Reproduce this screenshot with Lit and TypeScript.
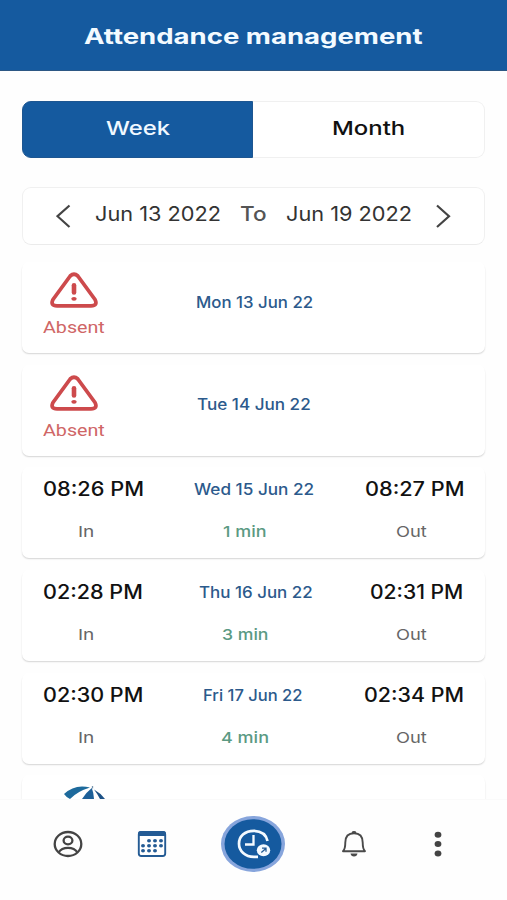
import { LitElement, html, css, svg } from "lit";
import { customElement, property, query } from "lit/decorators.js";

/** One line of text whose glyphs are widened to span a given width. */
@customElement("wide-text")
class WideText extends LitElement {
  @property() text = "";
  @property({ type: Number }) span = 0;
  @property({ type: Number }) lead = 0;
  @query(".glyphs") glyphs!: HTMLElement;

  static styles = css`
    :host { display: block; flex: none; white-space: nowrap; }
    .glyphs { display: inline-block; transform-origin: 0 50%; }
  `;

  updated() {
    this.style.width = `${this.span}px`;
    this.style.marginLeft = `${this.lead}px`;
    this.fit();
    document.fonts.ready.then(() => this.fit());
  }

  fit() {
    const natural = this.glyphs.offsetWidth;
    if (natural) this.glyphs.style.transform = `scaleX(${this.span / natural})`;
  }

  render() {
    return html`<span class="glyphs">${this.text}</span>`;
  }
}

// [text, width, space before]
type Label = [string, number, number];
interface Day {
  date: Label;
  absent?: boolean;
  start?: Label;
  end?: Label;
  total?: Label;
}

const days: Day[] = [
  { date: ["Mon 13 Jun 22", 117.5, 91], absent: true },
  { date: ["Tue 14 Jun 22", 114, 92], absent: true },
  { start: ["08:26 PM", 101.5, 0], date: ["Wed 15 Jun 22", 120, 49.5], end: ["08:27 PM", 99, 50.5], total: ["1 min", 43, 128] },
  { start: ["02:28 PM", 99.5, 0], date: ["Thu 16 Jun 22", 114, 56.5], end: ["02:31 PM", 93, 57], total: ["3 min", 47, 127] },
  { start: ["02:30 PM", 100.5, 0], date: ["Fri 17 Jun 22", 99.5, 59.5], end: ["02:34 PM", 100, 61], total: ["4 min", 48, 126] },
];

const label = ([text, span, lead]: Label, cls: string) =>
  html`<wide-text class=${cls} .text=${text} .span=${span} .lead=${lead}></wide-text>`;

const warning = svg`<svg class="warning" width="48" height="37" viewBox="0 0 48 37" fill="none" stroke="#cd4a4c">
  <path d="M20.2 4Q24 .4 27.8 4L45 27.500Q48 33.800 41 33.800H7Q0 33.800 3 27.500Z" stroke-width="3.8" stroke-linejoin="round"/>
  <path d="M24 13.300V20.500" stroke-width="4.600" stroke-linecap="round"/>
  <ellipse cx="24" cy="26.800" rx="2.700" ry="1.900" fill="#cd4a4c" stroke="none"/>
</svg>`;

@customElement("app-root")
class AppRoot extends LitElement {
  static styles = css`
    :host {
      display: flex; flex-direction: column; height: 900px; overflow: hidden;
      background: #fefefe; font-family: Inter, "Liberation Sans", sans-serif;
    }
    * { box-sizing: border-box; }
    svg { display: block; flex: none; }
    .header {
      flex: none; height: 71px; padding: 22px 0 0 84px; background: #155a9f;
      border-bottom: 1px solid #2c5784; color: #f3faff;
    }
    .title { font-size: 21.5px; line-height: 29px; font-weight: 650; }
    .content { flex: 1; min-height: 0; overflow: hidden; padding: 30px 22px 0; }
    .tabs { display: flex; height: 57px; }
    .tab {
      width: 232px; line-height: 54px; font-size: 19px; font-weight: 550; color: #111;
      border: 1px solid #f0f0f0; border-left: 0; border-radius: 0 9px 9px 0; background: #fff;
    }
    .tab.active {
      width: 231px; border: 1px solid #1d5691; border-radius: 9px 0 0 9px;
      background: #155a9f; color: #f0f8ff;
    }
    .range {
      display: flex; height: 58px; margin-top: 29px; padding-left: 33px;
      border: 1px solid #f0f0f0; border-bottom-color: #ebebeb; border-radius: 9px; background: #fff;
      font-size: 20px; line-height: 52px; color: #333;
    }
    .to { font-weight: 500; color: #555; }
    .arrow { margin-top: 15.5px; }
    .arrow.next { margin-left: 24px; }
    .list { display: grid; grid-auto-rows: 91px; row-gap: 11.7px; margin-top: 17px; }
    .card {
      margin-right: 1px; padding: 0 21px; border-radius: 7px; background: #fff;
      box-shadow: 0 1.5px 1.5px -0.5px rgba(0, 0, 0, 0.16);
    }
    .card.absent { display: flex; }
    .status { display: flex; flex-direction: column; width: 62px; padding-top: 10px; }
    .warning { margin-left: 7px; }
    .absent-label { font-family: Roboto, sans-serif; font-size: 17.3px; line-height: 36px; color: #cf6666; }
    .card.absent .date { margin-top: 29.5px; }
    .row { display: flex; height: 20px; line-height: 20px; margin-top: 12px; }
    .row + .row { margin-top: 23px; }
    .time { font-size: 19.5px; font-weight: 500; color: #111; }
    .date { font-size: 15.3px; line-height: 21px; font-weight: 550; color: #2c5a8c; }
    .dir { font-size: 15px; color: #666; }
    .total { font-size: 15px; font-weight: 500; color: #5b9a83; }
    .umbrella { margin: 11px 0 0 20px; }
    .nav {
      flex: none; display: flex; align-items: center; height: 101px; padding: 0 0 13px 53px;
      background: #fefefe; border-top: 1px solid #fafafa;
    }
    .calendar { margin-left: 54px; }
    .clock { margin-left: 54px; }
    .bell { margin-left: 56px; }
    .more { margin-left: 66.5px; }
  `;

  card(day: Day) {
    if (day.absent) {
      return html`<div class="card absent">
        <div class="status">${warning}${label(["Absent", 61.5, 0], "absent-label")}</div>
        ${label(day.date, "date")}
      </div>`;
    }
    const [, totalWidth, totalLead] = day.total!;
    return html`<div class="card">
      <div class="row">
        ${label(day.start!, "time")}${label(day.date, "date")}${label(day.end!, "time")}
      </div>
      <div class="row">
        ${label(["In", 16.5, 35], "dir")}
        ${label(day.total!, "total")}
        ${label(["Out", 30.5, 301.5 - totalWidth - totalLead], "dir")}
      </div>
    </div>`;
  }

  calendarDots() {
    const rows: [number, number[]][] = [[10.8, [11, 17, 23]], [15.8, [5, 11, 17, 23]], [20.7, [5, 11, 17]]];
    return rows.map(([y, xs]) => xs.map((x) => svg`<ellipse cx=${x} cy=${y} rx="2" ry="1.75"/>`));
  }

  render() {
    return html`
      <div class="header">${label(["Attendance management", 338, 0], "title")}</div>
      <div class="content">
        <div class="tabs">
          <div class="tab active">${label(["Week", 64, 83], "name")}</div>
          <div class="tab">${label(["Month", 73, 79], "name")}</div>
        </div>
        <div class="range">
          <svg class="arrow" width="16" height="24" viewBox="0 0 16 24" fill="none" stroke="#444" stroke-width="2.2">
            <path d="M13.500 1.500 1.500 12.200 13.500 23"/>
          </svg>
          ${label(["Jun 13 2022", 126, 23], "day")}
          ${label(["To", 27, 18.5], "to")}
          ${label(["Jun 19 2022", 126, 19.5], "day")}
          <svg class="arrow next" width="16" height="24" viewBox="0 0 16 24" fill="none" stroke="#444" stroke-width="2.200">
            <path d="M1 1.500 13 12.200 1 23"/>
          </svg>
        </div>
        <div class="list">
          ${days.map((d) => this.card(d))}
          <div class="card">
            <svg class="umbrella" width="44" height="26" viewBox="0 0 44 26">
              <path d="M1 8Q12-2.500 27 1.500 14 5.500 7 13 3 11 1 8Z" fill="#1d6a9c"/>
              <path d="M19 13Q23 6.500 28.800 2 30.500 6 31 13Z" fill="#1c5f98"/>
              <path d="M31 3.500Q37.500 7 42 13H37Q34.500 8 31 3.500Z" fill="#1d5286"/>
              <path d="M29.500 0V2.500" stroke="#7895ad" stroke-width="1.300"/>
            </svg>
          </div>
        </div>
      </div>
      <div class="nav">
        <svg width="30" height="28" viewBox="0 0 30 28" fill="none" stroke="#444" stroke-width="2.300">
          <ellipse cx="15" cy="14" rx="13.300" ry="12"/>
          <ellipse cx="15" cy="10.500" rx="4.400" ry="3.900"/>
          <path d="M5.500 22.500Q8.500 17.800 15 17.800T24.500 22.500"/>
        </svg>
        <svg class="calendar" width="30" height="28" viewBox="0 0 30 28" fill="#245b94">
          <rect x="1.800" y="2" width="26.400" height="24" rx="2.500" fill="#fff" stroke="#245b94" stroke-width="1.900"/>
          <path d="M1 6V4Q1 1 4 1H26Q29 1 29 4V6Z"/>
          <g transform="translate(1 0)">${this.calendarDots()}</g>
        </svg>
        <svg class="clock" width="64" height="56" viewBox="0 0 64 56" fill="none">
          <ellipse cx="32" cy="28" rx="32" ry="28" fill="#87a5dc"/>
          <ellipse cx="32" cy="28" rx="28.500" ry="24.800" fill="#155a9f"/>
          <path d="M46.500 25Q44.500 15.300 33 14.800C23.500 14.800 18 20.500 18 27.700S24 40.800 33 40.800H37" stroke="#f4faff" stroke-width="2.700"/>
          <path d="M32.500 19V28.500H24" stroke="#f4faff" stroke-width="2.300"/>
          <ellipse cx="42.500" cy="34.300" rx="7.500" ry="6.800" fill="#155a9f"/>
          <ellipse cx="42.500" cy="34.300" rx="6.700" ry="6" fill="#f4faff"/>
          <path d="M40.300 36.600 44.600 32.700M41 32.200H45V35.800" stroke="#245b94" stroke-width="1.300"/>
        </svg>
        <svg class="bell" width="26" height="28" viewBox="0 0 26 28" fill="none" stroke="#4a4a4a" stroke-width="1.900">
          <path d="M2 21.200Q4.300 19 4.300 12.500C4.300 6.500 7.500 3.200 13 3.200S21.700 6.500 21.700 12.500Q21.700 19 24 21.200Z" stroke-linejoin="round"/>
          <ellipse cx="13" cy="2.500" rx="2.200" ry="1.400" fill="#4a4a4a" stroke="none"/>
          <path d="M9.500 23.500H16.500Q16 26.500 13 26.500T9.500 23.500Z" fill="#4a4a4a" stroke="none"/>
        </svg>
        <svg class="more" width="8" height="28" viewBox="0 0 8 28" fill="#444">
          <ellipse cx="4" cy="4.700" rx="3.400" ry="3"/>
          <ellipse cx="4" cy="14" rx="3.400" ry="3"/>
          <ellipse cx="4" cy="23.500" rx="3.400" ry="3"/>
        </svg>
      </div>
    `;
  }
}
